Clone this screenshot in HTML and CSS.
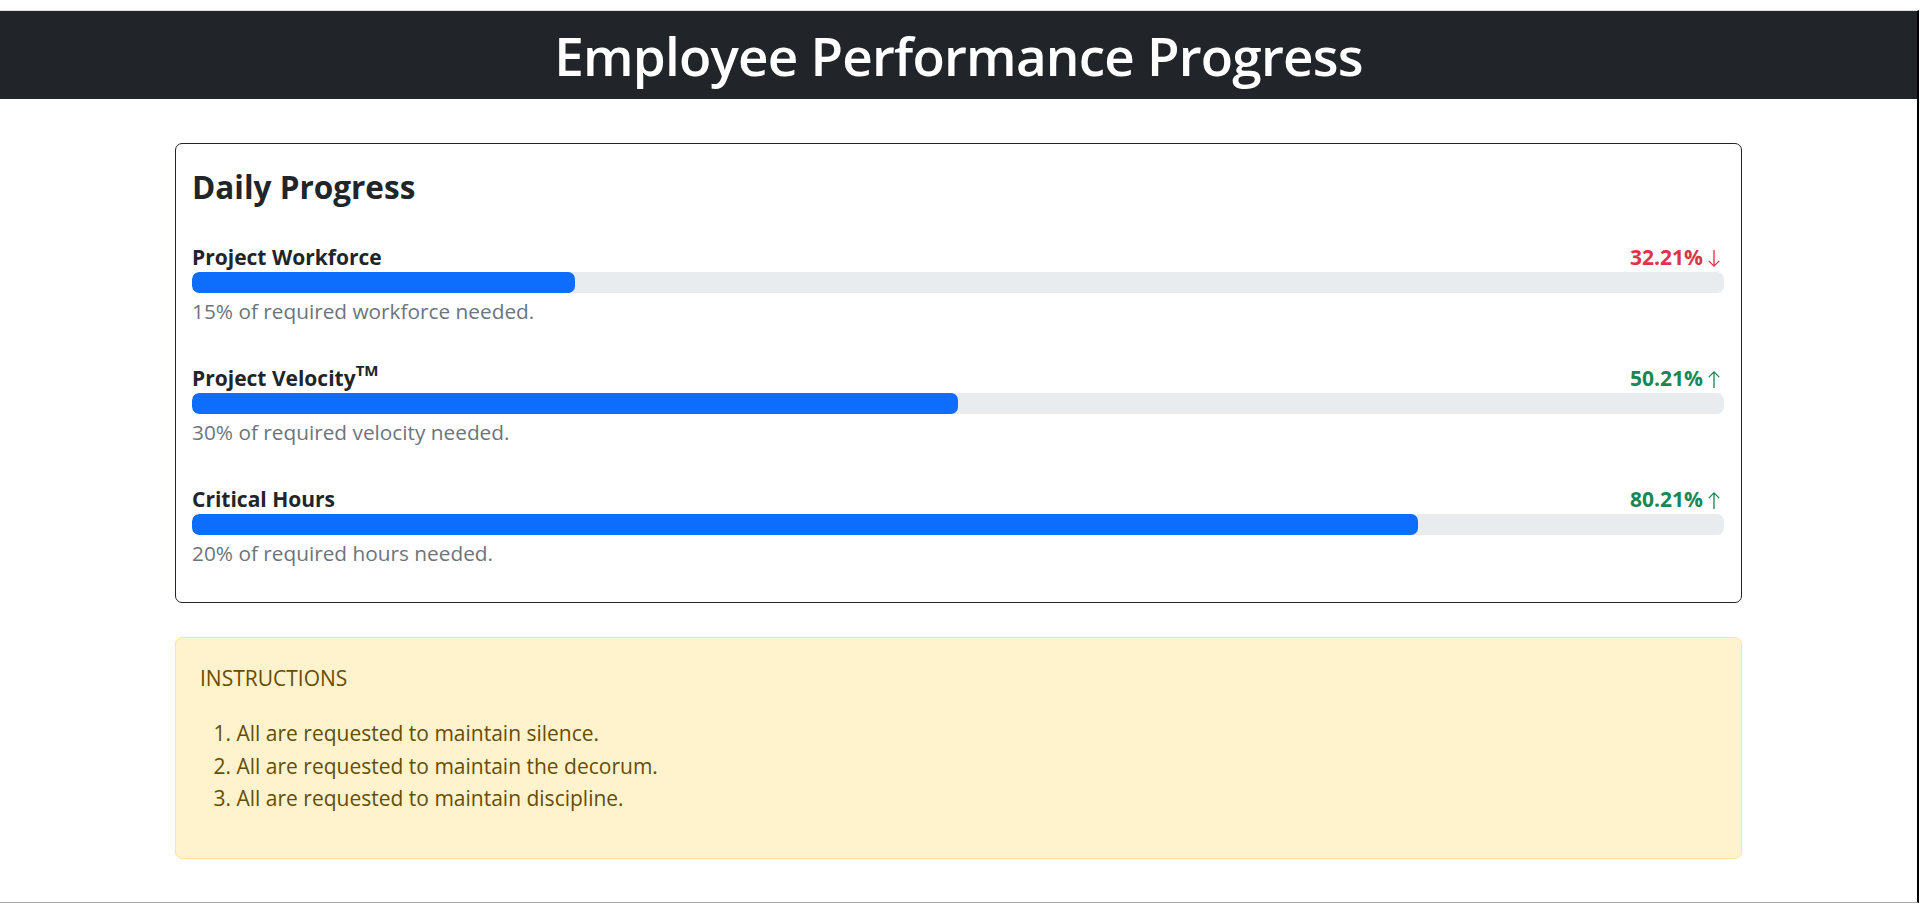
FILE: index.html
```html
<!DOCTYPE html>
<html lang="en">
<head>
<meta charset="utf-8">
<title>Employee Performance Progress</title>
<link rel="stylesheet" href="styles.css">
</head>
<body>
<div class="frame">
  <header class="topbar">
    <h1 class="title">Employee Performance Progress</h1>
  </header>
  <main class="container">
    <section class="card">
      <h3 class="card-title">Daily Progress</h3>

      <div class="metric">
        <div class="metric-head">
          <span class="metric-name">Project Workforce</span>
          <span class="metric-val down">32.21%<svg class="arrow" viewBox="0 0 14 20" aria-hidden="true"><path d="M7 1V18M1.5 12.5L7 18L12.5 12.5"/></svg></span>
        </div>
        <div class="bar"><div class="bar-fill" style="width:25%"></div></div>
        <div class="metric-note">15% of required workforce needed.</div>
      </div>

      <div class="metric">
        <div class="metric-head">
          <span class="metric-name">Project Velocity<sup class="tm">TM</sup></span>
          <span class="metric-val up">50.21%<svg class="arrow" viewBox="0 0 14 20" aria-hidden="true"><path d="M7 19V2M1.5 7.5L7 2L12.5 7.5"/></svg></span>
        </div>
        <div class="bar"><div class="bar-fill" style="width:50%"></div></div>
        <div class="metric-note">30% of required velocity needed.</div>
      </div>

      <div class="metric">
        <div class="metric-head">
          <span class="metric-name">Critical Hours</span>
          <span class="metric-val up">80.21%<svg class="arrow" viewBox="0 0 14 20" aria-hidden="true"><path d="M7 19V2M1.5 7.5L7 2L12.5 7.5"/></svg></span>
        </div>
        <div class="bar"><div class="bar-fill" style="width:80%"></div></div>
        <div class="metric-note">20% of required hours needed.</div>
      </div>
    </section>

    <section class="alert">
      <div class="alert-title">INSTRUCTIONS</div>
      <ol class="alert-list">
        <li>All are requested to maintain silence.</li>
        <li>All are requested to maintain the decorum.</li>
        <li>All are requested to maintain discipline.</li>
      </ol>
    </section>
  </main>
</div>
</body>
</html>
```

FILE: styles.css
```css
* { box-sizing: border-box; }

html, body {
  margin: 0;
  padding: 0;
  background: #fff;
}

body {
  font-family: "Open Sans", "Noto Sans", "Liberation Sans", sans-serif;
  color: #212529;
}

.frame {
  margin-top: 10px;
  width: 1919px;
  height: 893px;
  border-top: 1px solid #dedede;
  border-right: 2px solid #000;
  border-bottom: 1px solid #a8a8a8;
  background: #fff;
}

.topbar {
  height: 88px;
  background: #212529;
  display: flex;
  align-items: center;
  justify-content: center;
}

.title {
  margin: 0;
  color: #fff;
  font-size: 53px;
  font-weight: 600;
  line-height: 1.2;
  letter-spacing: -0.8px;
  position: relative;
  top: 1px;
}

.container {
  width: 1567px;
  margin: 44px auto 0;
}

.card {
  border: 1px solid #212529;
  border-radius: 7px;
  padding: 22px 17px 34px 16px;
}

.card-title {
  margin: 0 0 32px;
  font-size: 31.5px;
  font-weight: 700;
  line-height: 42px;
}

.metric + .metric {
  margin-top: 35px;
}

.metric-head {
  display: flex;
  justify-content: space-between;
  align-items: baseline;
  padding-top: 4px;
  line-height: 26px;
}

.metric-name {
  font-size: 21px;
  font-weight: 700;
}

.tm {
  font-size: 15px;
  line-height: 0;
  position: relative;
  top: -2px;
}

.metric-val {
  font-size: 21px;
  font-weight: 700;
  display: inline-flex;
  align-items: center;
  gap: 4px;
  padding-right: 3px;
}

.metric-val.down { color: #dc3545; }
.metric-val.up { color: #198754; }

.arrow {
  width: 14px;
  height: 19px;
  fill: none;
  stroke: currentColor;
  stroke-width: 1.4;
  position: relative;
  top: 1px;
}

.bar {
  height: 21px;
  margin: 2px 0 3px;
  background: #e9ecef;
  border-radius: 7px;
  overflow: hidden;
}

.bar-fill {
  height: 100%;
  background: #0d6efd;
  border-radius: 7px;
}

.metric-note {
  font-size: 20.8px;
  line-height: 30px;
  color: #6c757d;
}

.alert {
  margin-top: 34px;
  height: 222px;
  background: #fff3cd;
  border: 1px solid #ffe69c;
  border-radius: 7px;
  padding: 25px 24px 20px;
  color: #664d03;
}

.alert-title {
  font-size: 21px;
  line-height: 30px;
}

.alert-list {
  margin: 24px 0 0;
  padding-left: 36.5px;
  font-size: 21px;
  line-height: 32.5px;
}
```
